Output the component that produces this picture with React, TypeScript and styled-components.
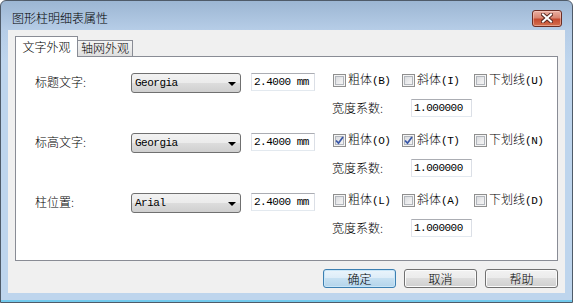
import React from "react";
import styled, { createGlobalStyle } from "styled-components";

const GlobalStyle = createGlobalStyle`
  html, body { margin: 0; padding: 0; background: #ffffff; }
  body {
    font-family: "Noto Sans CJK SC", "Noto Sans", sans-serif;
    font-size: 12px;
    font-weight: 300;
    color: #000;
  }
  * { box-sizing: border-box; }
`;

const Window = styled.div`
  width: 573px;
  height: 303px;
  display: flex;
  flex-direction: column;
  border: 1px solid #4f5b69;
  border-radius: 6px 6px 0 0;
  background: linear-gradient(180deg, #9cb6d3 0px, #b6cde7 29px, #bed5ed 60px, #bed5ed 100%);
  padding: 0 7px 9px 7px;
  box-shadow: inset 0 -2px 0 #72c9ec;
`;

const TitleBar = styled.div`
  height: 29px;
  flex: none;
  display: flex;
  align-items: center;
  justify-content: space-between;
  padding: 5px 3px 0 4px;
`;

const Title = styled.div`
  font-size: 12px;
  line-height: 16px;
  color: #000;
`;

const CloseButton = styled.div`
  width: 30px;
  height: 17px;
  border: 1px solid #6b2d24;
  border-radius: 3px;
  background: linear-gradient(180deg, #eab0a3 0%, #d98672 45%, #c54a30 55%, #d4714f 100%);
  box-shadow: inset 0 0 0 1px rgba(255, 220, 210, 0.45);
  display: flex;
  align-items: center;
  justify-content: center;
`;

const Client = styled.div`
  flex: 1;
  background: #f0f0f0;
  display: flex;
  flex-direction: column;
  padding: 6px 7px 0 7px;
`;

const TabStrip = styled.div`
  height: 20px;
  display: flex;
  align-items: flex-end;
  position: relative;
  z-index: 1;
`;

const Tab = styled.div<{ $active?: boolean }>`
  border: 1px solid #898c95;
  border-bottom: none;
  text-align: center;
  font-size: 12px;
  ${(p) =>
    p.$active
      ? `
    width: 63px;
    height: 21px;
    margin-bottom: -1px;
    background: #ffffff;
    padding-top: 2px;
    line-height: 16px;
  `
      : `
    width: 56px;
    height: 16px;
    margin-left: -1px;
    background: linear-gradient(180deg, #f3f3f3 0%, #ebebeb 50%, #dedede 100%);
    line-height: 14px;
  `}
`;

const Panel = styled.div`
  height: 205px;
  border: 1px solid #898c95;
  background: #ffffff;
  padding: 16px 0 0 19px;
  display: flex;
  flex-direction: column;
`;

const Group = styled.div`
  height: 60px;
  display: flex;
  align-items: flex-start;
`;

const Label = styled.div`
  width: 96px;
  line-height: 17px;
`;

const Mono = styled.span`
  font-family: "Liberation Mono", "DejaVu Sans Mono", monospace;
  font-weight: 400;
  font-size: 11px;
  letter-spacing: -0.5px;
  color: #000;
`;

const Select = styled.div`
  width: 110px;
  height: 20px;
  margin-right: 10px;
  border: 1px solid #707070;
  border-radius: 3px;
  background: linear-gradient(180deg, #f2f2f2 0%, #ebebeb 50%, #dddddd 50%, #cfcfcf 100%);
  display: flex;
  align-items: center;
  padding: 0 4px 0 3px;
  font-family: "Liberation Mono", "DejaVu Sans Mono", monospace;
  font-weight: 400;
  font-size: 11px;
  letter-spacing: -0.5px;
  color: #000;
`;

const Arrow = styled.span`
  margin-left: auto;
  width: 0;
  height: 0;
  border-left: 4px solid transparent;
  border-right: 4px solid transparent;
  border-top: 4px solid #000;
  margin-top: 1px;
`;

const TextBox = styled.div<{ $w: number }>`
  width: ${(p) => p.$w}px;
  height: 18px;
  border: 1px solid;
  border-color: #abadb3 #dbdfe6 #e3e9ef #e2e3ea;
  background: #fff;
  padding-left: 2px;
  line-height: 16px;
  font-family: "Liberation Mono", "DejaVu Sans Mono", monospace;
  font-weight: 400;
  font-size: 11px;
  letter-spacing: -0.5px;
  color: #000;
  white-space: nowrap;
`;

const Options = styled.div`
  margin-left: 18px;
  display: flex;
  flex-direction: column;
`;

const CheckRow = styled.div`
  height: 14px;
  display: flex;
  align-items: center;
`;

const CheckItem = styled.div<{ $w?: number }>`
  ${(p) => (p.$w ? `width: ${p.$w}px;` : "")}
  display: flex;
  align-items: center;
  gap: 2px;
  line-height: 14px;
  white-space: nowrap;
`;

const Box = styled.div`
  width: 13px;
  height: 13px;
  flex: none;
  border: 1px solid #8f8f8f;
  background: linear-gradient(135deg, #d2d4d8 0%, #eeeeef 60%, #f8f8f8 100%);
  box-shadow: inset 0 0 0 1px #f4f4f4, inset 0 0 0 2px #b3b7bd;
  display: flex;
  align-items: center;
  justify-content: center;
`;

const WidthRow = styled.div`
  margin-top: 12px;
  display: flex;
  align-items: center;
`;

const WidthLabel = styled.div`
  width: 79px;
  margin-left: -1px;
  line-height: 18px;
`;

const ButtonRow = styled.div`
  margin-top: 8px;
  display: flex;
  justify-content: flex-end;
  gap: 8px;
`;

const Button = styled.div<{ $default?: boolean }>`
  width: 73px;
  height: 19px;
  border: 1px solid ${(p) => (p.$default ? "#3c7fb1" : "#707070")};
  border-radius: 3px;
  background: ${(p) =>
    p.$default
      ? "linear-gradient(180deg, #eaf4fb 0%, #dcecf8 50%, #c6e0f2 50%, #b4d4ea 100%)"
      : "linear-gradient(180deg, #f2f2f2 0%, #ebebeb 50%, #dddddd 50%, #cfcfcf 100%)"};
  box-shadow: inset 0 0 0 1px ${(p) => (p.$default ? "#c9e6f8" : "#fbfbfb")};
  text-align: center;
  line-height: 17px;
  font-size: 12px;
`;

const Check = ({ checked }: { checked?: boolean }) => (
  <Box>
    {checked && (
      <svg width="9" height="9" viewBox="0 0 9 9">
        <path d="M1 4.5 L3.5 7.2 L8 1" fill="none" stroke="#3a58a8" strokeWidth="1.8" />
      </svg>
    )}
  </Box>
);

type Row = {
  label: string;
  font: string;
  keys: [string, string, string];
  bold?: boolean;
  italic?: boolean;
};

const rows: Row[] = [
  { label: "标题文字:", font: "Georgia", keys: ["B", "I", "U"] },
  { label: "标高文字:", font: "Georgia", keys: ["O", "T", "N"], bold: true, italic: true },
  { label: "柱位置:", font: "Arial", keys: ["L", "A", "D"] },
];

export default function App() {
  return (
    <>
      <GlobalStyle />
      <Window>
        <TitleBar>
          <Title>图形柱明细表属性</Title>
          <CloseButton>
            <svg width="12" height="10" viewBox="0 0 12 10">
              <path d="M2 1.5 L10 8.5 M10 1.5 L2 8.5" stroke="#5a2a22" strokeWidth="4" strokeLinecap="square" />
              <path d="M2 1.5 L10 8.5 M10 1.5 L2 8.5" stroke="#ffffff" strokeWidth="2" strokeLinecap="square" />
            </svg>
          </CloseButton>
        </TitleBar>
        <Client>
          <TabStrip>
            <Tab $active>文字外观</Tab>
            <Tab>轴网外观</Tab>
          </TabStrip>
          <Panel>
            {rows.map((r) => (
              <Group key={r.label}>
                <Label>{r.label}</Label>
                <Select>
                  {r.font}
                  <Arrow />
                </Select>
                <TextBox $w={64}>2.4000 mm</TextBox>
                <Options>
                  <CheckRow>
                    <CheckItem $w={69}>
                      <Check checked={r.bold} />
                      <span>
                        粗体<Mono>({r.keys[0]})</Mono>
                      </span>
                    </CheckItem>
                    <CheckItem $w={72}>
                      <Check checked={r.italic} />
                      <span>
                        斜体<Mono>({r.keys[1]})</Mono>
                      </span>
                    </CheckItem>
                    <CheckItem>
                      <Check />
                      <span>
                        下划线<Mono>({r.keys[2]})</Mono>
                      </span>
                    </CheckItem>
                  </CheckRow>
                  <WidthRow>
                    <WidthLabel>宽度系数:</WidthLabel>
                    <TextBox $w={61}>1.000000</TextBox>
                  </WidthRow>
                </Options>
              </Group>
            ))}
          </Panel>
          <ButtonRow>
            <Button $default>确定</Button>
            <Button>取消</Button>
            <Button>帮助</Button>
          </ButtonRow>
        </Client>
      </Window>
    </>
  );
}
